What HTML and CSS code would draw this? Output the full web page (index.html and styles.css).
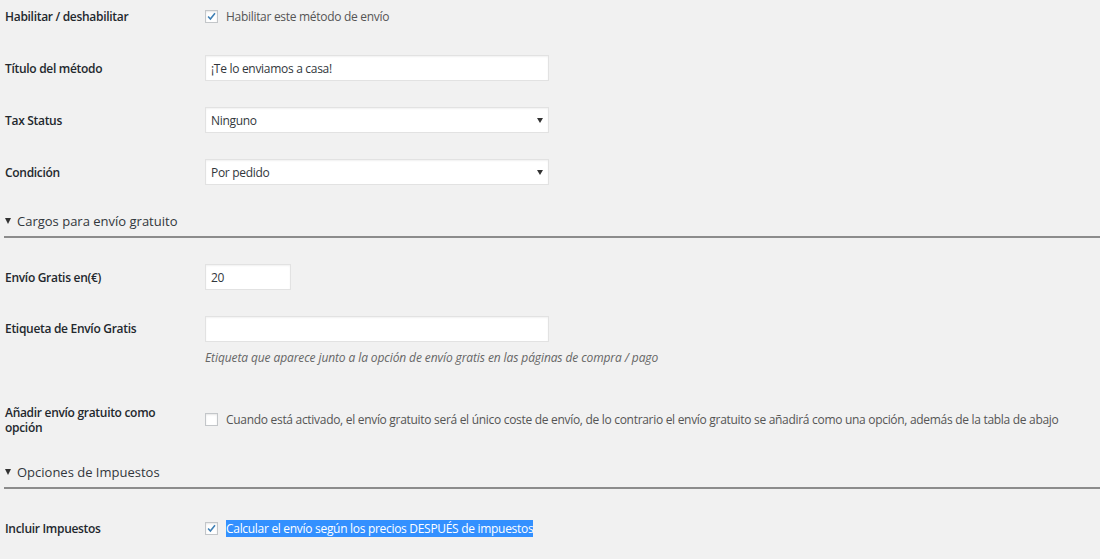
FILE: index.html
```html
<!DOCTYPE html>
<html lang="es">

<head>
    <meta charset="UTF-8">
    <meta name="viewport" content="width=device-width, initial-scale=1.0">
    <title>Método de envío</title>
    <link rel="stylesheet" href="styles.css">
</head>

<body>
    <main class="settings">
        <div class="row row-first">
            <div class="label">Habilitar / deshabilitar</div>
            <div class="field">
                <label class="check"><span class="box checked"><svg viewBox="0 0 12 12"><path d="M2.3 6l2.5 2.7 5-6.2" /></svg></span>Habilitar este método de envío</label>
            </div>
        </div>

        <div class="row">
            <div class="label">Título del método</div>
            <div class="field">
                <div class="input wide">¡Te lo enviamos a casa!</div>
            </div>
        </div>

        <div class="row">
            <div class="label">Tax Status</div>
            <div class="field">
                <div class="input wide select">Ninguno<span class="arrow"></span></div>
            </div>
        </div>

        <div class="row">
            <div class="label">Condición</div>
            <div class="field">
                <div class="input wide select">Por pedido<span class="arrow"></span></div>
            </div>
        </div>

        <h3 class="section"><span class="toggle"></span>Cargos para envío gratuito</h3>

        <div class="row">
            <div class="label">Envío Gratis en(€)</div>
            <div class="field">
                <div class="input small">20</div>
            </div>
        </div>

        <div class="row row-desc">
            <div class="label">Etiqueta de Envío Gratis</div>
            <div class="field">
                <div class="input wide"></div>
                <p class="description">Etiqueta que aparece junto a la opción de envío gratis en las páginas de compra / pago</p>
            </div>
        </div>

        <div class="row row-top">
            <div class="label">Añadir envío gratuito como opción</div>
            <div class="field">
                <label class="check"><span class="box"></span>Cuando está activado, el envío gratuito será el único coste de envío, de lo contrario el envío gratuito se añadirá como una opción, además de la tabla de abajo</label>
            </div>
        </div>

        <h3 class="section"><span class="toggle"></span>Opciones de Impuestos</h3>

        <div class="row">
            <div class="label">Incluir Impuestos</div>
            <div class="field">
                <label class="check"><span class="box checked"><svg viewBox="0 0 12 12"><path d="M2.3 6l2.5 2.7 5-6.2" /></svg></span><span class="selected">Calcular el envío según los precios DESPUÉS de impuestos</span></label>
            </div>
        </div>
    </main>
</body>

</html>
```

FILE: styles.css
```css
body {
    margin: 0;
    padding: 0;
    background-color: #f1f1f1;
    font-family: 'Open Sans', sans-serif;
    font-size: 12px;
    letter-spacing: -0.3px;
    color: #444;
}

.settings {
    padding: 0 0 0 4px;
}

.row {
    display: flex;
    align-items: center;
    min-height: 26px;
    margin-bottom: 26px;
}

.row-first {
    margin-top: 3px;
}

.label {
    box-sizing: border-box;
    width: 201px;
    padding: 0 40px 0 1px;
    font-weight: 600;
    color: #23282d;
    line-height: 15px;
}

.field {
    flex: 1;
}

.input {
    box-sizing: border-box;
    height: 26px;
    padding: 0 5px;
    background-color: #fff;
    border: 1px solid #e2e2e2;
    box-shadow: inset 0 1px 2px rgba(0, 0, 0, 0.06);
    color: #32373c;
    line-height: 26px;
    position: relative;
}

.wide {
    width: 344px;
}

.small {
    width: 86px;
}

.arrow {
    position: absolute;
    right: 5px;
    top: 10px;
    border-left: 3px solid transparent;
    border-right: 3px solid transparent;
    border-top: 5px solid #333;
}

.check {
    display: flex;
    align-items: center;
    color: #555;
    line-height: 17px;
}

.box {
    box-sizing: border-box;
    width: 13px;
    height: 13px;
    margin-right: 8px;
    background-color: #fff;
    border: 1px solid #c3c6c9;
    box-shadow: inset 0 1px 2px rgba(0, 0, 0, 0.1);
    flex-shrink: 0;
}

.box svg {
    display: block;
    width: 11px;
    height: 11px;
    fill: none;
    stroke: #3f7fb4;
    stroke-width: 1.7;
}

.selected {
    background-color: #3390ff;
    color: #fff;
}

.section {
    margin: 0 0 26px;
    padding: 0 0 5px 1px;
    border-bottom: 2px solid #8c8c8c;
    font-size: 13px;
    font-weight: normal;
    letter-spacing: 0;
    color: #32373c;
    line-height: 20px;
}

.toggle {
    display: inline-block;
    vertical-align: 2px;
    margin-right: 6px;
    border-left: 3px solid transparent;
    border-right: 3px solid transparent;
    border-top: 6px solid #333;
}

.description {
    margin: 7px 0 0;
    font-style: italic;
    letter-spacing: -0.1px;
    color: #666;
}

.row-desc {
    align-items: flex-start;
    margin-bottom: 39px;
}

.row-desc .label {
    line-height: 26px;
}

.row-top {
    align-items: flex-start;
    margin-bottom: 27px;
}

.row-top .field {
    padding-top: 6px;
}
```
